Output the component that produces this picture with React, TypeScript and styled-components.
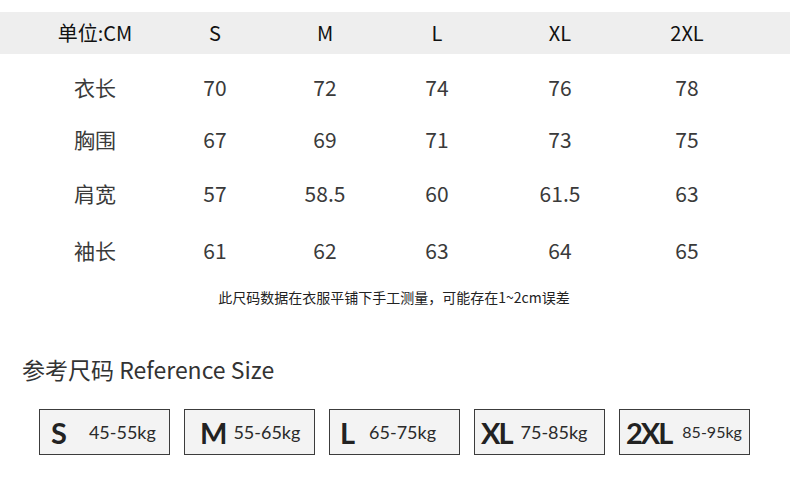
import styled, { createGlobalStyle } from 'styled-components'

const GlobalStyle = createGlobalStyle`
	html, body {
		margin: 0;
		padding: 0;
		background: #ffffff;
	}
	body {
		width: 790px;
		height: 487px;
		overflow: hidden;
		font-family: 'Noto Sans CJK SC', 'Noto Sans', sans-serif;
		color: #333333;
	}
`

const COLUMNS = '120px 120px 100px 124px 122px 132px'

const Page = styled.div`
	padding-top: 12px;
`

const HeaderRow = styled.div`
	display: grid;
	grid-template-columns: ${COLUMNS};
	padding-left: 35px;
	height: 42px;
	align-items: center;
	background: #eeeeee;
	font-size: 20px;
	font-weight: 400;
	color: #111111;
`

const Body = styled.div`
	padding-top: 7px;
`

const Row = styled.div<{ $h: number }>`
	display: grid;
	grid-template-columns: ${COLUMNS};
	padding-left: 35px;
	height: ${(p) => p.$h}px;
	align-items: center;
	font-size: 21px;
	font-weight: 400;
	color: #3a3a3a;
`

const Cell = styled.div`
	text-align: center;
	line-height: 1;
`

const Note = styled.p`
	margin: 9px 0 0;
	line-height: 18px;
	font-size: 14px;
	text-align: center;
	color: #222222;
	padding-right: 2px;
`

const Title = styled.h2`
	margin: 48px 0 0 22px;
	font-size: 23px;
	font-weight: 400;
	line-height: 30px;
	color: #333333;
`

const Sizes = styled.div`
	display: flex;
	gap: 14px;
	padding-left: 39px;
	margin-top: 25px;
`

const SizeBox = styled.div<{ $pad: number; $gap: number }>`
	box-sizing: border-box;
	width: 131px;
	height: 46px;
	border: 1.5px solid #3c3c3c;
	background: #f3f3f3;
	display: flex;
	align-items: center;
	gap: ${(p) => p.$gap}px;
	padding-left: ${(p) => p.$pad}px;
	font-family: Lato, 'Noto Sans', sans-serif;
	color: #222222;
`

const Letter = styled.span`
	font-size: 29px;
	font-weight: 700;
	letter-spacing: -2px;
	line-height: 1;
`

const Weight = styled.span<{ $size: number }>`
	font-size: ${(p) => p.$size}px;
	line-height: 1;
	color: #2a2a2a;
`

const HEAD = ['单位:CM', 'S', 'M', 'L', 'XL', '2XL']

const ROWS: { label: string; values: string[]; h: number }[] = [
	{ label: '衣长', values: ['70', '72', '74', '76', '78'], h: 52 },
	{ label: '胸围', values: ['67', '69', '71', '73', '75'], h: 52 },
	{ label: '肩宽', values: ['57', '58.5', '60', '61.5', '63'], h: 56 },
	{ label: '袖长', values: ['61', '62', '63', '64', '65'], h: 58 },
]

const REFS = [
	{ size: 'S', kg: '45-55kg', pad: 11, gap: 24, fs: 18 },
	{ size: 'M', kg: '55-65kg', pad: 15, gap: 8, fs: 18 },
	{ size: 'L', kg: '65-75kg', pad: 10, gap: 16, fs: 18 },
	{ size: 'XL', kg: '75-85kg', pad: 6, gap: 9, fs: 18 },
	{ size: '2XL', kg: '85-95kg', pad: 6, gap: 11, fs: 16 },
]

export default function App() {
	return (
		<>
			<GlobalStyle />
			<Page>
				<HeaderRow>
					{HEAD.map((h) => (
						<Cell key={h}>{h}</Cell>
					))}
				</HeaderRow>
				<Body>
					{ROWS.map((r) => (
						<Row key={r.label} $h={r.h}>
							<Cell>{r.label}</Cell>
							{r.values.map((v, i) => (
								<Cell key={i}>{v}</Cell>
							))}
						</Row>
					))}
				</Body>
				<Note>此尺码数据在衣服平铺下手工测量，可能存在1~2cm误差</Note>
				<Title>参考尺码 Reference Size</Title>
				<Sizes>
					{REFS.map((r) => (
						<SizeBox key={r.size} $pad={r.pad} $gap={r.gap}>
							<Letter>{r.size}</Letter>
							<Weight $size={r.fs}>{r.kg}</Weight>
						</SizeBox>
					))}
				</Sizes>
			</Page>
		</>
	)
}
